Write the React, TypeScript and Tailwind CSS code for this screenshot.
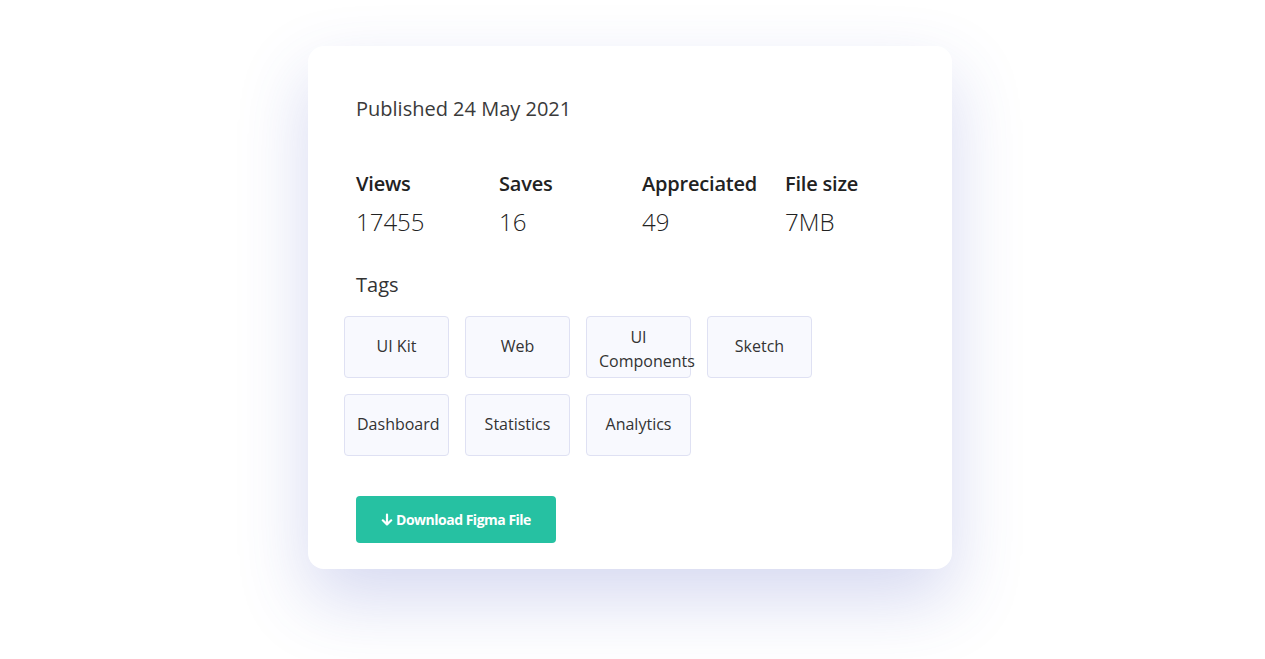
import React from "react";

const tags = ["UI Kit", "Web", "UI Components", "Sketch", "Dashboard", "Statistics", "Analytics"];
const stats = [
  { label: "Views", value: "17455" },
  { label: "Saves", value: "16" },
  { label: "Appreciated", value: "49" },
  { label: "File size", value: "7MB" },
];

export default function App() {
  return (
    <div
      className="w-[1265px] h-[659px] bg-white flex justify-start pl-[308px] pt-[46px] overflow-hidden"
      style={{ fontFamily: '"Open Sans", sans-serif' }}
    >
      <div className="w-[644px] h-[523px] shrink-0 bg-white rounded-[16px] shadow-[0_30px_70px_rgba(70,80,190,0.22)] pt-[49px] pl-[48px] pr-[48px] text-[#333]">
        <p className="text-[20px] leading-[28px] text-[#3a3a3a]">Published 24 May 2021</p>
        <div className="grid grid-cols-[143px_143px_143px_143px] mt-[47px]">
          {stats.map((s) => (
            <div key={s.label}>
              <div className="text-[20px] leading-[28px] font-semibold text-[#222] tracking-[-0.2px]">{s.label}</div>
              <div className="text-[24px] leading-[32px] font-light text-[#222] mt-[8px]">{s.value}</div>
            </div>
          ))}
        </div>
        <p className="text-[20px] leading-[28px] text-[#333] mt-[33px]">Tags</p>
        <div className="-ml-[12px] mt-[17px] grid grid-cols-[105px_105px_105px_105px] gap-[16px]">
          {tags.map((t) => (
            <div
              key={t}
              className={
                t === "UI Components"
                  ? "h-[62px] px-[12px] pt-[4px] bg-[#f8f9fe] border border-[#dfe1f3] rounded-[4px] flex items-center"
                  : "h-[62px] px-[12px] pb-[2px] bg-[#f8f9fe] border border-[#dfe1f3] rounded-[4px] flex items-center"
              }
            >
              <div className="w-full text-center text-[16px] leading-[24px] text-[#333]">{t}</div>
            </div>
          ))}
        </div>
        <button className="mt-[40px] w-[200px] h-[47px] bg-[#26c1a2] rounded-[4px] text-white text-[14px] font-bold tracking-[-0.5px] flex items-center justify-center gap-[3px]">
          <svg width="12" height="13" viewBox="0 0 12 13" fill="none" stroke="white" strokeWidth="2.2" strokeLinecap="round" strokeLinejoin="round">
            <path d="M6 1.5v10M1.8 7.3L6 11.5l4.2-4.2" />
          </svg>
          Download Figma File
        </button>
      </div>
    </div>
  );
}
